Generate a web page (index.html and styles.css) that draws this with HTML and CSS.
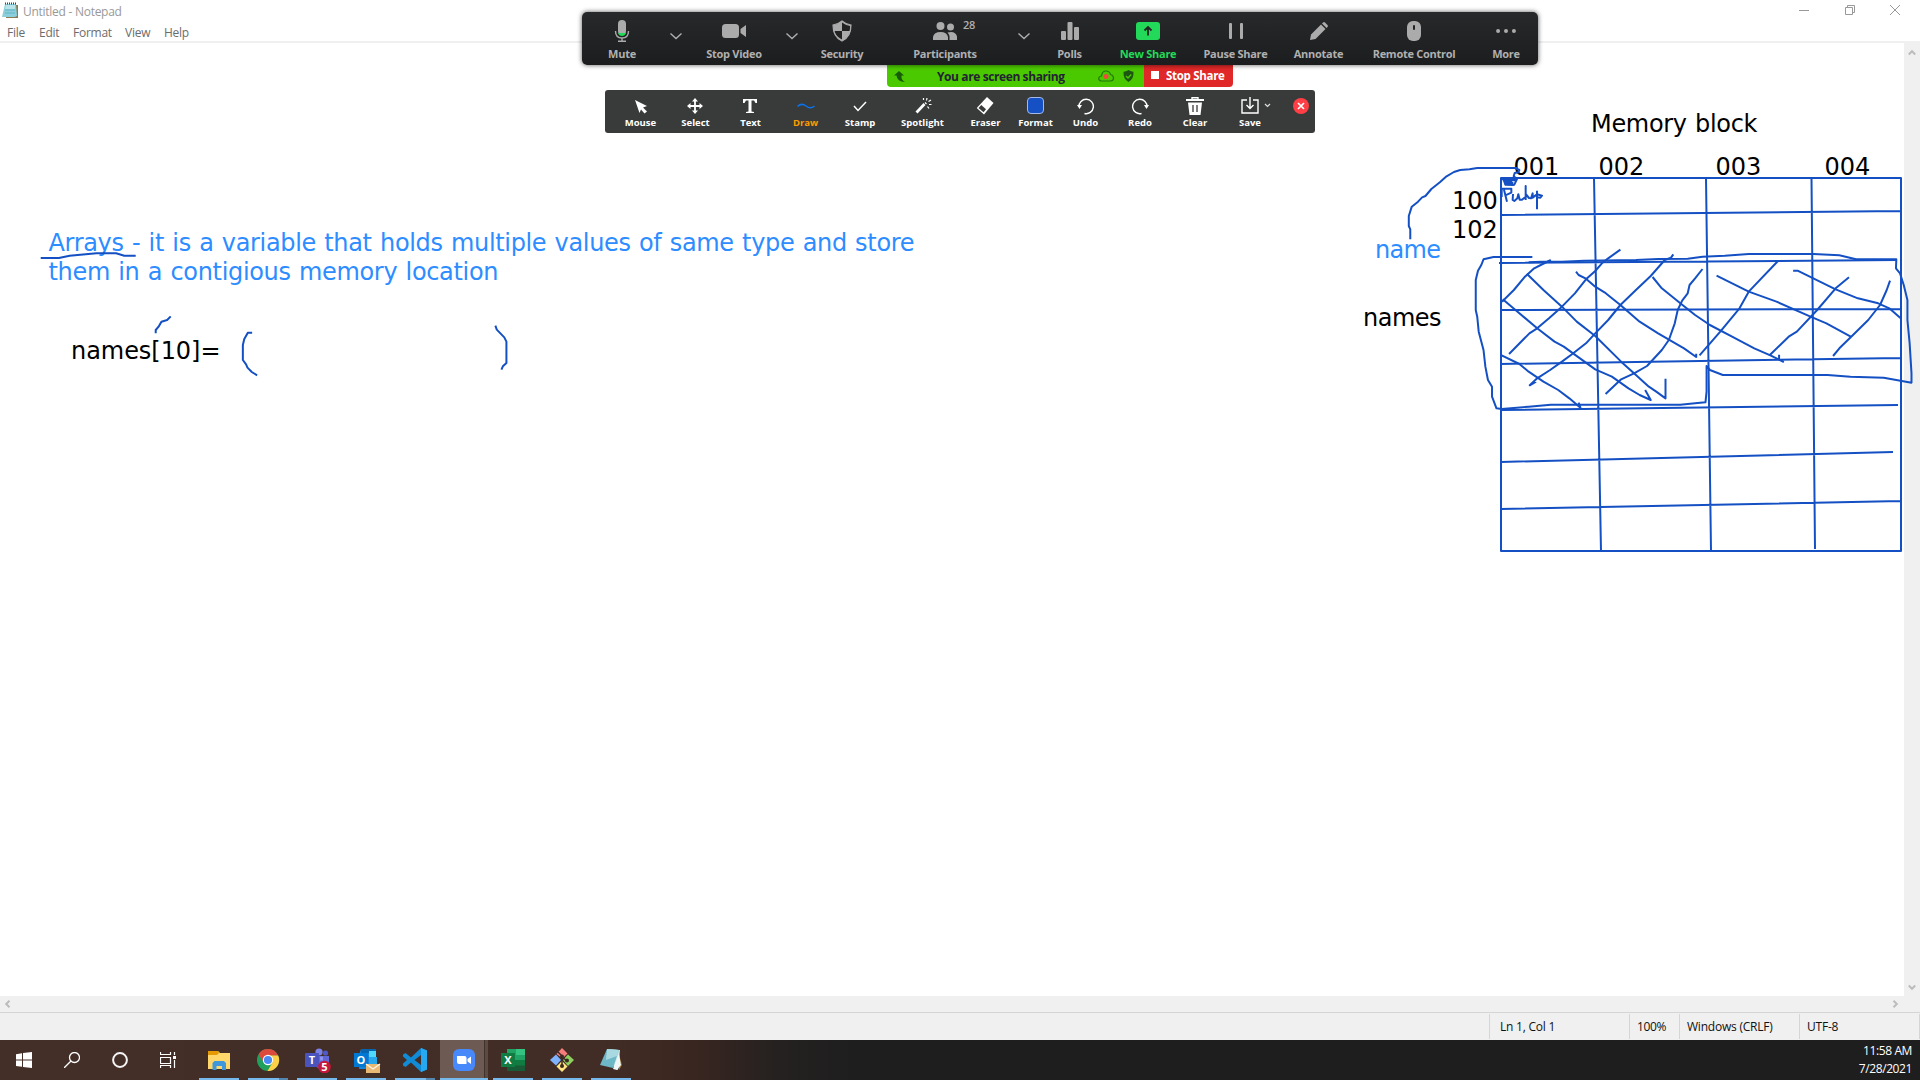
FILE: index.html
```html
<!DOCTYPE html>
<html lang="en">
<head>
<meta charset="utf-8">
<title>Untitled - Notepad</title>
<link rel="stylesheet" href="styles.css">
</head>
<body>
<div class="desktop">
  <main class="notepad">
    <header class="titlebar">
      <svg class="app-icon" width="16" height="17" viewBox="0 0 16 17"><path d="M4 3h12v13H4z" fill="#8a7a4c"/><path d="M3 2h11l1 12-2 1H0z" fill="#8ccfdc"/><path d="M4 3h9v4H3z" fill="#b9e5ea"/><path d="M3 1.500h12" stroke="#37474a" stroke-width="2" stroke-dasharray="1 1"/><path d="M3 8h10M3 11h10" stroke="#65b4c5"/></svg>
      <span class="title">Untitled - Notepad</span>
      <div class="window-buttons">
        <svg width="10" height="12" viewBox="0 0 10 12"><path d="M0 6.500h10"/></svg>
        <svg width="10" height="12" viewBox="0 0 10 12"><path d="M.5 3.500h7v7h-7zM2.500 3V1.500h7v7H8"/></svg>
        <svg width="10" height="12" viewBox="0 0 10 12"><path d="M0 1l10 10M10 1L0 11"/></svg>
      </div>
    </header>
    <nav class="menubar"><span class="m-file">File</span><span class="m-edit">Edit</span><span class="m-format">Format</span><span class="m-view">View</span><span>Help</span></nav>
    <div class="editor">
      <div class="page"></div>
      <div class="vscroll">
        <svg width="8" height="7" viewBox="0 0 8 7"><path d="M.8 5.500L4 2.200l3.200 3.300"/></svg>
        <svg width="8" height="7" viewBox="0 0 8 7"><path d="M.8 1.500L4 4.800l3.200-3.300"/></svg>
      </div>
    </div>
    <div class="hscroll">
      <svg width="7" height="8" viewBox="0 0 7 8"><path d="M5.500.8L2.200 4l3.300 3.200"/></svg>
      <svg width="7" height="8" viewBox="0 0 7 8"><path d="M1.500.8L4.800 4 1.500 7.200"/></svg>
    </div>
    <footer class="statusbar"><span class="s-pos">Ln 1, Col 1</span><span class="s-zoom">100%</span><span class="s-eol">Windows (CRLF)</span><span class="s-enc">UTF-8</span></footer>
  </main>

  <footer class="taskbar">
    <div class="system">
      <svg viewBox="0 0 16 16" width="16" height="16" fill="#fff"><path d="M0 2.300L6 1.200v6.300H0zM7 1l9-1v7.500H7zM0 8.500h6v6.200L0 14zM7 8.500h9V16l-9-1z"/></svg>
      <svg viewBox="0 0 16 16" width="16" height="16" fill="none" stroke="#fff" stroke-width="1.300"><circle cx="10.500" cy="5.500" r="5"/><path d="M7 9L0 16"/></svg>
      <svg viewBox="0 0 16 16" width="16" height="16" fill="none" stroke="#f4f4f4" stroke-width="2"><circle cx="8" cy="8" r="6.900"/></svg>
      <svg viewBox="0 0 16 16" width="16" height="16" fill="none" stroke="#fff" stroke-width="1.200"><path d="M.5 0v2.500h10V0M.5 5.500h10v6H.5zM.5 16v-2.500h10V16M14.500 0v3M14.500 8v8"/><path d="M13 4h3v3h-3z" fill="#fff" stroke="none"/></svg>
    </div>
    <div class="apps">
      <div class="app"><svg viewBox="0 0 24 24" width="24" height="24"><path d="M1 3h10l2 2h10v16H1z" fill="#ffd76a"/><path d="M1 3h10l1 2-2 2H1z" fill="#e39a04"/><path d="M5.500 22v-7l2-2h9.500l2 2v7h-4v-4H9.500v4z" fill="#3f97dc"/></svg></div>
      <div class="app multi"><svg viewBox="0 0 24 24" width="24" height="24"><circle cx="12" cy="12" r="11" fill="#1fa15d"/><path d="M2.500 6.500A11 11 0 0 1 22 7.500L12 8 7.500 14z" fill="#dc4a3d"/><path d="M12 7.500h10.200A11 11 0 0 1 11.500 23l5-8.500z" fill="#fdd047"/><circle cx="12" cy="12" r="5.200" fill="#fff"/><circle cx="12" cy="12" r="4.100" fill="#4a8af4"/></svg></div>
      <div class="app"><svg class="wide" viewBox="0 0 28 26" width="28" height="26"><circle cx="15" cy="5" r="3.600" fill="#7b83eb"/><circle cx="21.500" cy="6" r="2.600" fill="#5059c9"/><path d="M12 9h13v8a5 5 0 0 1-5 5h-4a5 5 0 0 1-4-5z" fill="#6168d4"/><rect x="1" y="6" width="14" height="14" rx="1" fill="#4b53bc"/><path d="M16 9.500h3v4h-3z" fill="#8c93f0"/><text x="8" y="17" class="glyph">T</text><circle cx="20.500" cy="20" r="6.300" fill="#c4173b"/><text x="20.500" y="24" class="glyph">5</text></svg></div>
      <div class="app"><svg class="wide" viewBox="0 0 28 26" width="28" height="26"><path d="M8 2h15v20H6V8z" fill="#1684d8"/><path d="M8 2h15v4H8z" fill="#0864ad"/><path d="M16 4h7v6h-7z" fill="#50d9ff"/><path d="M16 10h8v8h-8z" fill="#28a8ea"/><rect x="1" y="6" width="14" height="14" fill="#0078d4"/><text x="8" y="17" class="glyph">O</text><path d="M13 17h14v9H13z" fill="#e9b875"/><path d="M13 17l7 5 7-5" fill="none" stroke="#fff5df" stroke-width="1.400"/></svg></div>
      <div class="app multi"><svg viewBox="0 0 24 24" width="24" height="24"><path d="M18 0l6 2.600v18.800L18 24 8 14.500 2.500 19 0 17.500v-2L4 12 0 8.500v-2L2.500 5 8 9.500zM18 7l-6.500 5 6.500 5z" fill="#118bd6" fill-rule="evenodd"/><path d="M18 0l6 2.600v18.800L18 24z" fill="#27a9f1"/></svg></div>
      <div class="app active"><svg viewBox="0 0 24 24" width="24" height="24"><rect x="1" y="1" width="22" height="22" rx="6" fill="#4789fb"/><path d="M5 8h7.500q2 0 2 2v6H7q-2 0-2-2zM15.500 11L19 8.500v7.500l-3.500-2.500z" fill="#fff"/></svg></div>
      <div class="app"><svg viewBox="0 0 24 24" width="24" height="24"><path d="M6 1h18v22H6z" fill="#21a366"/><path d="M15 1h9v6h-9z" fill="#33c481"/><path d="M6 12h9v6H6zM15 12h9v6h-9z" fill="#107c41"/><path d="M6 17.500h18V23H6z" fill="#185c37"/><rect y="5" width="14" height="14" fill="#107c41"/><text x="7" y="16" class="glyph">X</text></svg></div>
      <div class="app"><svg viewBox="0 0 24 24" width="24" height="24"><path d="M12 0l5.500 5.500-5 5-6-4.500z" fill="#f77d7d"/><path d="M6 6.500l5 5.500-5 5.500L0 12z" fill="#80b3ff"/><path d="M18 6.500l6 5.500-6 6-5-6z" fill="#8ed05d"/><path d="M12 13l5.500 5.500L12 24l-5.500-5.500z" fill="#ffe680"/><path d="M8 4l4 4v11M12 9l5 4" fill="none" stroke="#3b2923" stroke-width="1.500"/><g fill="#3b2923"><circle cx="12" cy="8.500" r="2"/><circle cx="17" cy="12.500" r="2"/><circle cx="12" cy="18" r="2"/></g></svg></div>
      <div class="app"><svg viewBox="0 0 24 24" width="24" height="24"><path d="M19 3l4 14-3 5z" fill="#97783d"/><path d="M8 1l13 1-2 20-4-2z" fill="#d3e7ea"/><path d="M8 1l12 1-6 18-13-3z" fill="#6eb7c6"/><path d="M8 1l12 1-2 6-11 4z" fill="#a9d9e0"/><path d="M20 6l-6 15 4 1 4-5z" fill="#eef6f7"/></svg></div>
    </div>
    <div class="clock"><span>11:58 AM</span><span>7/28/2021</span></div>
  </footer>

  <svg class="ink" width="1920" height="1080" viewBox="0 0 1920 1080">
    <g class="note">
      <g class="blue">
        <text x="48.500" y="251" textLength="866">Arrays - it is a variable that holds multiple values of same type and store</text>
        <text x="48.500" y="280" textLength="450">them in a contigious memory location</text>
        <text x="1375" y="258" textLength="66">name</text>
      </g>
      <text x="71" y="359" textLength="149.500">names[10]=</text>
      <text x="1591" y="131.500" textLength="166.500">Memory block</text>
      <text x="1513.500" y="174.500">001</text><text x="1598.500" y="174.500">002</text><text x="1715.500" y="174.500">003</text><text x="1824.500" y="174.500">004</text>
      <text x="1452" y="208.500">100</text><text x="1452" y="237.500">102</text>
      <text x="1363" y="325.500" textLength="78.500">names</text>
    </g>
    <g class="stroke">
      <path d="M1501 178H1901V551H1501ZM1594 178L1601 551M1706 178L1711 551M1811.500 178L1815 549M1500 215L1901 211M1499 263L1897 260M1501 310L1901 309M1500 364L1901 358M1501 410L1898 405M1501 462L1893 452M1501 509L1901 501"/>
      <g transform="translate(1340 90) scale(.3699 .33333)">
        <path d="M190 448V418L186 408V378L194 350 211 335 222 322 231 318 247 297 270 277 288 259 308 246 325 240 350 238 371 234H480"/>
        <path d="M520 501H415L388 508 382 525 373 542 367 570V660L371 680 375 725 388 780 393 830 400 870 411 890V920L423 955 437 957 510 950 570 944H920L960 940 988 937 991 905V828L1000 840 1035 855H1318L1380 860 1470 863 1545 878 1545 850 1540 760 1534 690V630L1524 585 1514 550 1503 535 1504 508H1395L1350 496 1280 492H1105L1040 497 980 500 940 506 860 507 800 510 660 512 600 515H545L510 517"/>
        <path d="M570 510L548 522 525 535 500 560 470 600 438 635M758 479L725 505 708 520 690 543 665 568 635 610 600 650 565 685 533 715 512 730 457 792M901 493L895 503 878 510 840 558 800 600 758 645 725 690 690 730 665 760 628 792 600 815 568 840 533 865 513 886 530 875M980 537L960 565 945 585 940 610 925 632 913 660 905 700 889 750 870 780 830 828 795 850 760 868 718 912M1184 513L1105 605 1080 655 1028 725 972 796M1376 562L1340 595 1290 660 1235 725 1213 740 1162 795M1487 572L1478 600 1460 645 1428 690 1382 740 1350 775 1333 798"/>
        <path d="M505 551L550 600 600 650 640 695 690 738 760 815 800 855 835 890 855 905 880 925V866M440 628L480 665 533 715 580 755 605 770 630 790 690 838 735 860 780 895 810 915 840 930 825 900M437 796L485 822 510 845 550 875 590 900 620 925 650 953 645 938M638 545L645 555 665 566 690 590 715 607 758 645 810 695 860 730 930 775 963 801V791M845 561L870 595 920 640 960 675 1000 705 1060 740 1120 775 1165 797 1200 816M1187 794V810M1018 557L1105 605 1180 635 1272 680 1315 700 1382 741M1225 542H1237L1340 598 1400 625 1455 640 1485 655 1515 684"/>
      </g>
      <g transform="translate(1460 150) scale(.33333)">
        <path d="M165 54L178 60 175 67 164 69 161 79 168 84M124 87H171L163 104 158 105 136 104 132 92 144 98 151 91 157 102M128 91H168M138 99H160"/>
        <path d="M125 141V116H154V128L136 136M132 119L141 155M159 132L158 150 163 153 172 145 175 133 179 149 186 149 197 140V108V150M197 132L207 144 213 145 218 130V143L231 133 246 137 241 143 231 142M231 122V178"/>
      </g>
      <g transform="translate(0 210) scale(.35714 .33333)">
        <path d="M114 144H165L195 137 225 134 270 130H325L348 137H380"/>
        <path d="M436 370V360L444 350 452 335 468 330 478 319M706 368H694L684 387 680 405V450L689 463 693 473 705 486 720 496M1387 347L1391 359 1412 382 1418 395V459L1408 469 1404 479"/>
      </g>
    </g>
  </svg>

  <section class="meeting">
    <div class="controls">
      <div class="c w80"><svg viewBox="0 0 24 24"><rect x="8" y="1" width="8" height="15" rx="4"/><path d="M8 14h8q-1 3-4 3t-4-3" fill="#23d959"/><path d="M5.500 12q0 7 6.500 7t6.500-7M12 19v3M8 22.300h8" fill="none" stroke="#ababab" stroke-width="1.400"/></svg><b>Mute</b></div>
      <div class="v w28"><svg viewBox="0 0 12 8"><path d="M.5 1.500L6 6.500l5.500-5"/></svg></div>
      <div class="c w88"><svg viewBox="0 0 24 24"><rect x="0" y="5" width="17" height="14" rx="3.500"/><path d="M18.500 10L24 6v12l-5.500-4z"/></svg><b>Stop Video</b></div>
      <div class="v w28"><svg viewBox="0 0 12 8"><path d="M.5 1.500L6 6.500l5.500-5"/></svg></div>
      <div class="c w72"><svg viewBox="0 0 24 24"><path d="M12 2q4 3.500 9 4 0 12-9 16-9-4-9-16 5-.5 9-4z"/><path d="M12 3.500v8.500h7.800q.2-2 .2-5-4-.5-8-3.500zM12 12v8.500Q5.500 17 4.200 12z" fill="#222"/><path d="M12 2q4 3.500 9 4 0 12-9 16-9-4-9-16 5-.5 9-4z" fill="none" stroke="#ababab" stroke-width="1.200"/></svg><b>Security</b></div>
      <div class="c w134"><svg viewBox="0 0 24 24"><circle cx="7.500" cy="7" r="4"/><circle cx="17.500" cy="8" r="3.500"/><path d="M0 21v-3q1-5 7.500-5t7.500 5v3zM16.500 21v-4q-.5-2-2-3.500 8-2 9.500 4V21z"/></svg><i class="count">28</i><b>Participants</b></div>
      <div class="v w24"><svg viewBox="0 0 12 8"><path d="M.5 1.500L6 6.500l5.500-5"/></svg></div>
      <div class="c w67"><svg viewBox="0 0 24 24"><rect x="3" y="12" width="5" height="9" rx="1"/><rect x="9.500" y="3" width="5" height="18" rx="1"/><rect x="16" y="8" width="5" height="13" rx="1"/></svg><b>Polls</b></div>
      <div class="c share w90"><svg viewBox="0 0 24 24"><rect y="3" width="24" height="18" rx="3"/><path d="M12 16.500v-8M8.500 11.500L12 8l3.500 3.500" fill="none" stroke="#222" stroke-width="1.800"/></svg><b>New Share</b></div>
      <div class="c w85"><svg viewBox="0 0 24 24"><rect x="5" y="4" width="3" height="16" rx="1"/><rect x="16" y="4" width="3" height="16" rx="1"/></svg><b>Pause Share</b></div>
      <div class="c w81"><svg viewBox="0 0 24 24"><path d="M3 21l1-5.500L14 5.500l4.500 4.500-10 10zM15 4.500l1-1q1-1 2 0l2.500 2.500q1 1 0 2l-1 1z"/></svg><b>Annotate</b></div>
      <div class="c w110"><svg viewBox="0 0 24 24"><rect x="5" y="2" width="14" height="20" rx="6"/><rect x="11" y="6" width="2" height="5" rx="1" fill="#222"/></svg><b>Remote Control</b></div>
      <div class="c more w69"><svg viewBox="0 0 24 24"><circle cx="2.500" cy="12" r="2.400"/><circle cx="12" cy="12" r="2.400"/><circle cx="21.500" cy="12" r="2.400"/></svg><b>More</b></div>
    </div>
    <div class="sharing">
      <div class="status">
        <svg width="11" height="11" viewBox="0 0 11 11"><path d="M5 0L0 4.500h2.500Q3 10.500 11 11 7 9 7.500 4.500H10z" fill="#175a08"/></svg>
        <b>You are screen sharing</b>
        <svg width="16" height="12" viewBox="0 0 16 12"><path d="M3 11q-3-1-2-3.500Q1.500 6 3.500 6 4 1 8 1q3.500 0 4.500 3.500 3 .5 3 3.500 0 3-3 3z" fill="none" stroke="#24760d" stroke-width="1.200"/><circle cx="8" cy="6.500" r="2.500" fill="#f04a3c"/></svg>
        <svg width="11" height="12" viewBox="0 0 11 12"><path d="M5.500 0q2.500 1.500 5 1.800Q11 9 5.500 12 0 9 .5 1.800 3 1.500 5.500 0z" fill="#1c5610"/><path d="M3 6l2 2 3.200-3.500" fill="none" stroke="#4bc900" stroke-width="1.300"/></svg>
      </div>
      <div class="stop"><i></i><b>Stop Share</b></div>
    </div>
    <div class="annotate">
      <div class="t w55"><svg viewBox="0 0 18 18"><path d="M3 3l12 6-4 1.500 4 4-2.500 2-3.500-4L7.500 16z"/></svg><b>Mouse</b></div>
      <div class="t w55"><svg viewBox="1 0 18 18"><path d="M9 1l3 3.500H6zM9 17l3-3.500H6zM1 9l3.500-3v6zM17 9l-3.500-3v6z"/><path d="M9 4v10M4 9h10" stroke="#fff" stroke-width="1.800"/></svg><b>Select</b></div>
      <div class="t w55"><svg viewBox="1 0 18 18"><path d="M2 2h14v4h-1.500L13 3.500h-2.500v11L13 15v1H5v-1l2.500-.5v-11H5L3.500 6H2z"/></svg><b>Text</b></div>
      <div class="t draw w55"><svg viewBox="0 0 18 18"><path d="M.5 9.500q4-4 8.500-.5t8.500 0" fill="none" stroke="#0b72e9" stroke-width="1.500"/></svg><b>Draw</b></div>
      <div class="t w54"><svg viewBox="0 0 18 18"><path d="M3 9l4 4.500L15 5" fill="none" stroke="#fff" stroke-width="1.500"/></svg><b>Stamp</b></div>
      <div class="t w71"><svg viewBox="0 0 18 18"><path d="M1.500 14.500L9.500 6l2 2-8 8.500z"/><path d="M12.500 7l-1.500-1.500M9.500 1v2M13 1l-.5 2.500M14.500 4.500L17 3M15 7.500h2.500M13.500 9.500l1.500 2" stroke="#fff" stroke-width="1.200"/></svg><b>Spotlight</b></div>
      <div class="t w55"><svg viewBox="1 0 18 18"><path d="M.8 11L11 0l6.500 6L8 17.500z"/><path d="M5.300 8L10 12.200l-2.500 3-5-4.200z" fill="#393b3b"/></svg><b>Eraser</b></div>
      <div class="t w45"><svg viewBox="1 0 18 18"><rect x="1.500" y=".5" width="16" height="16" rx="3.500" fill="#1550c5" stroke="#a4b9e5"/></svg><b>Format</b></div>
      <div class="t w55"><svg viewBox="1 0 18 18"><path d="M3 10a7.200 7.200 0 1 1 5.500 6.500" fill="none" stroke="#fff" stroke-width="1.400"/><path d="M1 8h5l-2.500 4z"/></svg><b>Undo</b></div>
      <div class="t w54"><svg viewBox="-1 0 18 18"><path d="M15 10A7.200 7.200 0 1 0 9.500 16.500" fill="none" stroke="#fff" stroke-width="1.400"/><path d="M12 8h5l-2.500 4z"/></svg><b>Redo</b></div>
      <div class="t w56"><svg viewBox="0 0 18 18"><path d="M0 2h18v2H0zM2 5.500h14L14.500 18h-11z"/><path d="M6 2V.7h6V2" fill="none" stroke="#fff" stroke-width="1.400"/><path d="M7 8v7M11 8v7" stroke="#393b3b" stroke-width="1.300"/></svg><b>Clear</b></div>
      <div class="t save w54"><svg viewBox="0 0 18 18"><path d="M6 3H1v13h16V3h-5M9 0v11M5.500 8L9 11.500 12.500 8" fill="none" stroke="#fff" stroke-width="1.400"/></svg><svg class="drop" viewBox="0 0 7 5"><path d="M1 1l2.500 2.500L6 1" fill="none" stroke="#ddd" stroke-width="1.200"/></svg><b>Save</b></div>
      <div class="t close w38"><svg viewBox="0 0 18 18"><circle cx="9" cy="9" r="8" fill="#ff3e45"/><path d="M6 6l6 6M12 6l-6 6" stroke="#fff" stroke-width="1.700"/></svg></div>
    </div>
  </section>
</div>
</body>
</html>
```
FILE: styles.css
```css
* { box-sizing: border-box; }
body { margin: 0; overflow: hidden; background: #fff; font: 12px/16px "Open Sans", "Noto Sans", sans-serif; }
.desktop { position: relative; width: 1920px; height: 1080px; display: flex; flex-direction: column; overflow: hidden; }
svg { display: block; flex: none; }
i { font-style: normal; }

.notepad { flex: 1; display: flex; flex-direction: column; min-height: 0; }
.titlebar { height: 24px; display: flex; align-items: center; padding-left: 2px; color: #999; letter-spacing: -.27px; }
.app-icon { margin-top: -3px; }
.title { margin-left: 5px; margin-top: -1px; }
.window-buttons { margin: -4px 20px 0 auto; display: flex; gap: 35.500px; fill: none; stroke: #999; }
.menubar { height: 19px; display: flex; padding-left: 7px; border-bottom: 2px solid #f0f0f0; color: #6c6c6c; line-height: 18px; letter-spacing: -.25px; }
.m-file { width: 32px; }
.m-edit { width: 34px; }
.m-format { width: 52px; }
.m-view { width: 39px; }
.editor { flex: 1; display: flex; }
.page { flex: 1; background: #fff; }
.vscroll { width: 16px; background: #f0f0f0; display: flex; flex-direction: column; align-items: center; justify-content: space-between; padding: 6px 1px 5px 0; fill: none; stroke: #bcbcbc; stroke-width: 2; }
.hscroll { height: 16px; background: #f0f0f0; display: flex; align-items: center; justify-content: space-between; padding: 0 21px 1px 4px; fill: none; stroke: #bcbcbc; stroke-width: 2; }
.statusbar { height: 28px; display: flex; justify-content: flex-end; background: #f0f0f0; border-top: 1px solid #d5d5d5; padding: 1px 0; color: #111; line-height: 26px; letter-spacing: -.22px; }
.statusbar span { border-left: 1px solid #d5d5d5; padding-left: 8px; white-space: nowrap; }
.statusbar .s-pos { width: 140px; padding-left: 10px; }
.statusbar .s-zoom { width: 50px; padding-left: 7px; letter-spacing: -.4px; }
.statusbar .s-eol { width: 120px; padding-left: 7px; }
.statusbar .s-enc { width: 121px; padding-left: 7px; border-right: 1px solid #d5d5d5; }

.taskbar { height: 40px; display: flex; background: linear-gradient(90deg, #442f28 0, #422d26 600px, #3a2620 690px, #242120 780px, #1e1e1e 860px); }
.system { display: flex; }
.system svg { margin: 12px 16px; }
.apps { display: flex; margin-left: 3px; }
.app { width: 49px; padding: 8px 5px 0 4px; display: flex; flex-direction: column; align-items: center; }
.app::after { content: ""; margin-top: auto; height: 2px; width: 40px; background: #76b9ed; }
.app.multi::after { background: linear-gradient(90deg, #76b9ed 31px, #5586ad 31px); }
.app.active { padding: 8px 0 0; background: linear-gradient(90deg, #6d5a53 44px, #40332e 44px, #40332e 45px, #5c4a43 45px, #5c4a43 48px, transparent 48px); align-items: flex-start; }
.app.active svg { margin-left: 12px; }
.app.active::after { width: 48px; }
.app .wide { margin: -1px -1px 0 1px; }
.glyph { font: bold 11px "Open Sans", sans-serif; fill: #fff; text-anchor: middle; }
.clock { margin-left: auto; padding: 2px 8px 0 0; display: flex; flex-direction: column; align-items: flex-end; color: #fff; line-height: 18px; letter-spacing: -.4px; }

.ink { position: absolute; left: 0; top: 0; }
.note { font: 24px "DejaVu Sans", Verdana, sans-serif; word-spacing: 1px; fill: #000; }
.note .blue { fill: #2d8cff; }
.stroke { fill: none; stroke: #1450c3; stroke-width: 2; stroke-linejoin: round; }
.stroke path { vector-effect: non-scaling-stroke; }

.meeting { position: absolute; left: 582px; top: 12px; width: 956px; }
.controls { position: relative; height: 53px; display: flex; border-radius: 5px; background: linear-gradient(#28292b, #1c1d1f); box-shadow: 0 0 5px rgba(0,0,0,.65); color: #b0b0b0; fill: #ababab; font-size: 11px; }
.c { position: relative; display: flex; flex-direction: column; align-items: center; padding-top: 7px; }
.c svg { width: 24px; height: 24px; }
.c b { margin-top: 3px; font-weight: 700; letter-spacing: -.27px; white-space: nowrap; }
.c.share { color: #23d959; fill: #23d959; }
.c.more { padding-left: 5px; }
.c.more svg { width: 20px; }
.count { position: absolute; left: 85px; top: 5px; font-size: 11px; font-weight: 600; letter-spacing: -.2px; }
.v { padding-top: 20px; display: flex; justify-content: center; }
.v svg { width: 12px; height: 8px; fill: none; stroke: #b0b0b0; stroke-width: 1.400; }
.sharing { display: flex; width: 346px; height: 22px; margin-left: 305px; font-size: 12px; line-height: 21px; border-radius: 0 0 4px 4px; overflow: hidden; }
.status { width: 257px; display: flex; align-items: center; padding-left: 7px; background: #4bc900; color: #232333; }
.status b { width: 154px; margin-left: 32px; font-weight: 700; letter-spacing: -.4px; white-space: nowrap; }
.status svg + svg { margin-left: 9px; }
.status b + svg { margin-left: 7px; }
.stop { flex: 1; display: flex; align-items: center; gap: 7px; padding: 0 0 2px 7px; background: #e02828; color: #fff; white-space: nowrap; }
.stop i { width: 8px; height: 8px; background: #fff; }
.stop b { font-weight: 700; font-size: 11.500px; letter-spacing: -.3px; }
.annotate { margin: 3px 0 0 23px; width: 710px; height: 43px; display: flex; padding-left: 8px; border-radius: 3px; background: #393b3b; color: #fff; fill: #fff; font-size: 9.500px; line-height: 12px; }
.t { position: relative; display: flex; flex-direction: column; align-items: center; padding-top: 7px; }
.t svg { width: 18px; height: 18px; }
.t b { margin-top: 2px; font-weight: 700; }
.t.draw { color: #ff9c00; }
.t.close { padding-left: 10px; }
.t .drop { position: absolute; left: 41px; top: 13px; width: 7px; height: 5px; }

.w24 { width: 24px; } .w28 { width: 28px; } .w38 { width: 38px; } .w45 { width: 45px; }
.w54 { width: 54px; } .w55 { width: 55px; } .w56 { width: 56px; } .w67 { width: 67px; }
.w69 { width: 69px; } .w71 { width: 71px; } .w72 { width: 72px; } .w80 { width: 80px; }
.w81 { width: 81px; } .w85 { width: 85px; } .w88 { width: 88px; } .w90 { width: 90px; }
.w110 { width: 110px; } .w134 { width: 134px; }
```
